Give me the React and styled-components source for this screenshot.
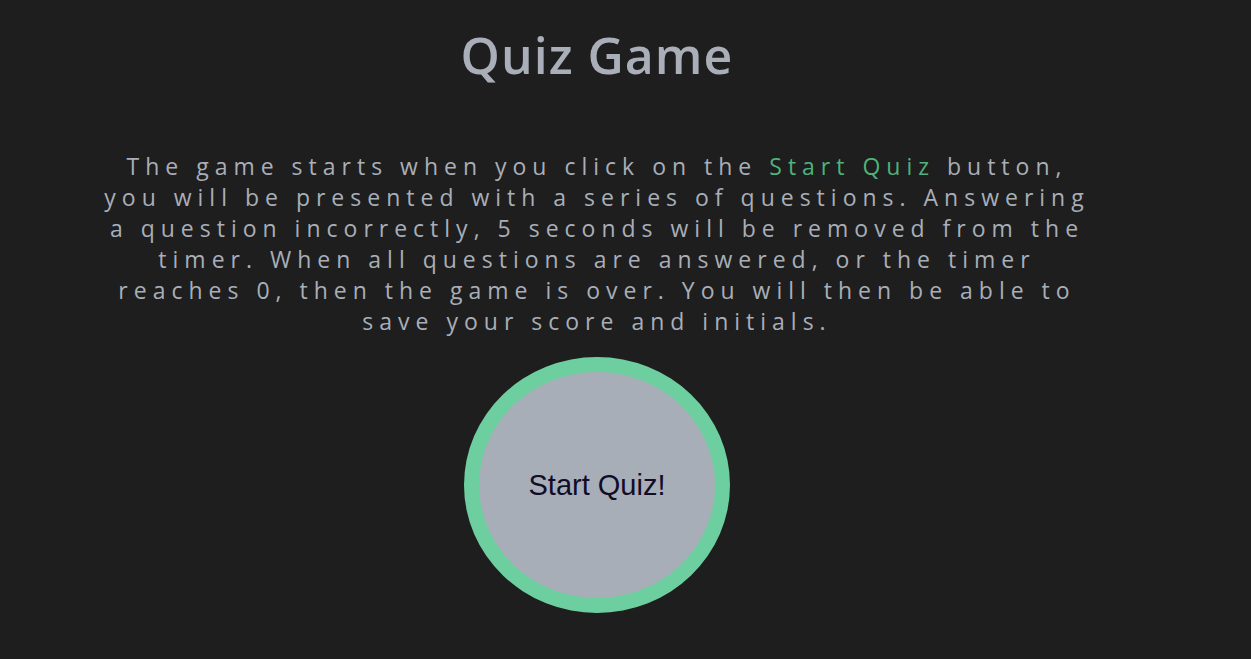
import React from "react";
import styled, { createGlobalStyle } from "styled-components";

const Global = createGlobalStyle`
  html, body { margin: 0; padding: 0; background: #1e1e1e; }
  body { font-family: "Open Sans", "Liberation Sans", sans-serif; }
`;

const Page = styled.main`
  width: 1194px;
  min-height: 659px;
  display: flex;
  flex-direction: column;
  align-items: center;
  padding-top: 24px;
  box-sizing: border-box;
`;

const Title = styled.h1`
  margin: 0;
  font-size: 50px;
  font-weight: 600;
  line-height: 62px;
  color: #a9aeb8;
  letter-spacing: 1px;
`;

const Intro = styled.p`
  margin: 65px 0 0;
  text-align: center;
  font-size: 23px;
  line-height: 31px;
  letter-spacing: 6px;
  white-space: nowrap;
  color: #a9aeb8;
`;

const Highlight = styled.span`
  color: #4fb27a;
`;

const StartButton = styled.button`
  margin-top: 20px;
  width: 266px;
  height: 256px;
  border-radius: 50%;
  border: 15px solid #6dcf9f;
  background: #a8aeb8;
  color: #110d26;
  font-family: "Liberation Sans", Arial, sans-serif;
  font-size: 29px;
  cursor: pointer;
  box-sizing: border-box;
  padding: 0;
`;

export default function App() {
  return (
    <>
      <Global />
      <Page>
        <Title>Quiz Game</Title>
        <Intro>
          The game starts when you click on the <Highlight>Start Quiz</Highlight> button,
          <br />
          you will be presented with a series of questions. Answering
          <br />
          a question incorrectly, 5 seconds will be removed from the
          <br />
          timer. When all questions are answered, or the timer
          <br />
          reaches 0, then the game is over. You will then be able to
          <br />
          save your score and initials.
        </Intro>
        <StartButton>Start Quiz!</StartButton>
      </Page>
    </>
  );
}
